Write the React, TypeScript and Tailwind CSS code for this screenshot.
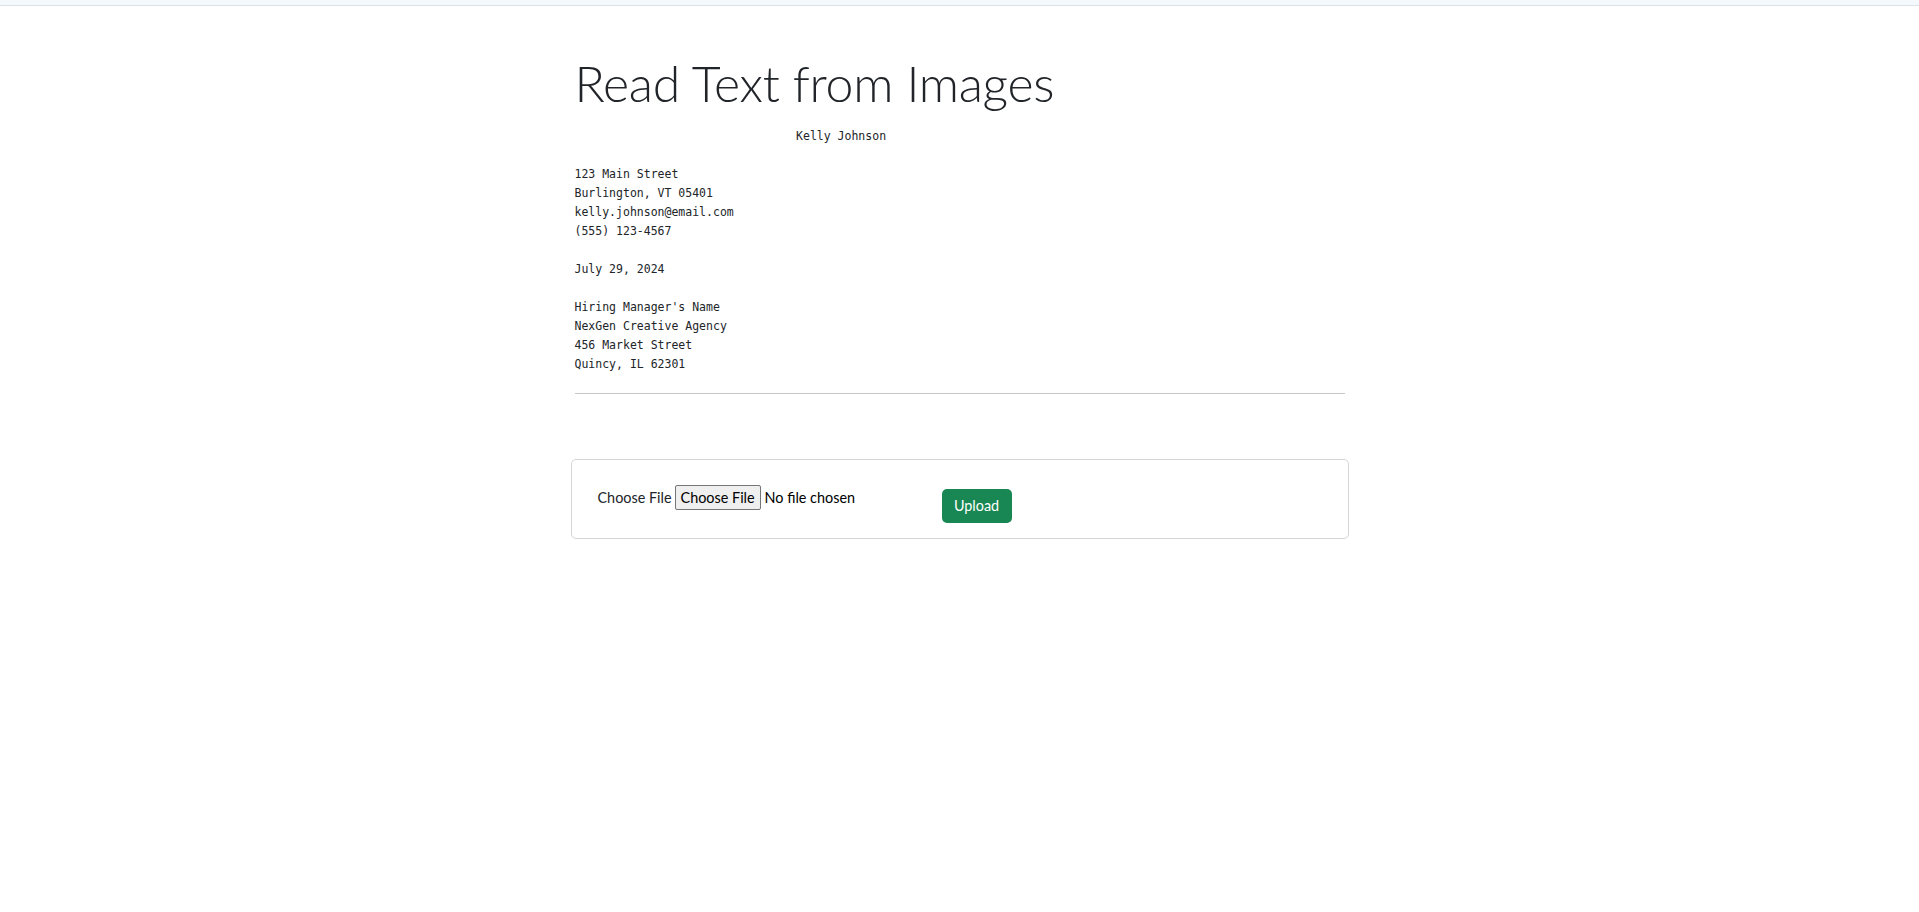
import React from "react";

const letter = [
  "                                Kelly Johnson",
  "",
  "123 Main Street",
  "Burlington, VT 05401",
  "kelly.johnson@email.com",
  "(555) 123-4567",
  "",
  "July 29, 2024",
  "",
  "Hiring Manager's Name",
  "NexGen Creative Agency",
  "456 Market Street",
  "Quincy, IL 62301",
].join("\n");

export default function App() {
  return (
    <div className="min-h-screen bg-white text-[#212529] font-['Lato',sans-serif]">
      {/* top strip */}
      <div className="h-[6px] bg-[#f3f9fc] border-b border-[#d9e3e8]" />

      <main className="w-[770px] mx-auto">
        <h1 className="mt-[47px] text-[50px] leading-[1.2] font-light tracking-[-0.3px] text-[#212529]">
          Read Text from Images
        </h1>

        <pre className="mt-[14px] font-['DejaVu_Sans_Mono',monospace] text-[11.5px] leading-[19px] whitespace-pre text-[#212529]">
          {letter}
        </pre>

        <hr className="mt-[19px] border-t border-[#c6c6c6]" />

        <div className="mt-[65px] -mx-[4px] w-[778px] border border-[#d5d5d5] rounded-[5px] pl-[26px] pt-[25px] pb-[15px]">
          <div className="flex items-start">
            <div className="w-[344px] flex items-center text-[14.4px] leading-[25px]">
              <span>Choose File</span>
              <span className="ml-[3px] h-[25px] px-[5px] flex items-center border border-[#767676] bg-[#efefef] rounded-[2px] text-black">
                Choose File
              </span>
              <span className="ml-[4px] text-black">No file chosen</span>
            </div>
            <button className="mt-[4px] w-[70px] h-[34px] rounded-[5px] bg-[#198754] text-white text-[14.4px]">
              Upload
            </button>
          </div>
        </div>
      </main>
    </div>
  );
}
